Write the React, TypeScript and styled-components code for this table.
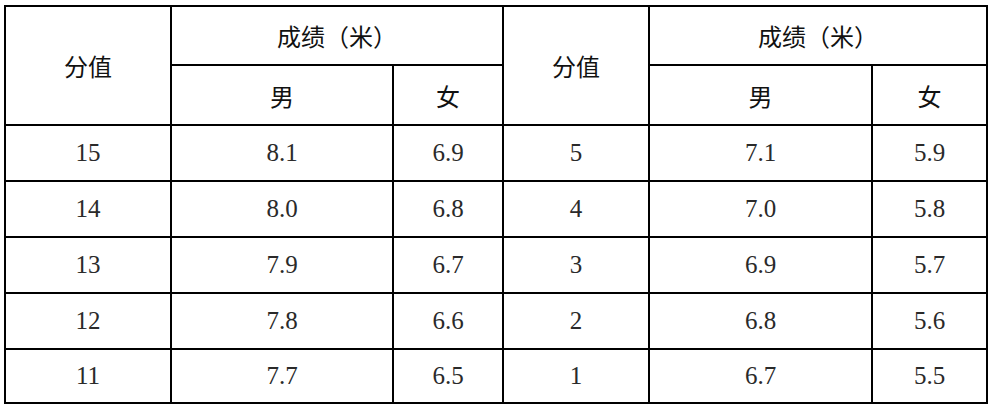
import styled, { createGlobalStyle } from "styled-components";

const GlobalStyle = createGlobalStyle`
  html, body {
    margin: 0;
    padding: 0;
    background: #ffffff;
  }
`;

interface IRow {
  scoreA: number;
  maleA: string;
  femaleA: string;
  scoreB: number;
  maleB: string;
  femaleB: string;
}

const rows: IRow[] = [
  { scoreA: 15, maleA: "8.1", femaleA: "6.9", scoreB: 5, maleB: "7.1", femaleB: "5.9" },
  { scoreA: 14, maleA: "8.0", femaleA: "6.8", scoreB: 4, maleB: "7.0", femaleB: "5.8" },
  { scoreA: 13, maleA: "7.9", femaleA: "6.7", scoreB: 3, maleB: "6.9", femaleB: "5.7" },
  { scoreA: 12, maleA: "7.8", femaleA: "6.6", scoreB: 2, maleB: "6.8", femaleB: "5.6" },
  { scoreA: 11, maleA: "7.7", femaleA: "6.5", scoreB: 1, maleB: "6.7", femaleB: "5.5" },
];

const colWidths = [166, 222, 110, 146, 223, 115];

function App() {
  return (
    <>
      <GlobalStyle />
      <Page>
        <Table>
          <colgroup>
            {colWidths.map((w, i) => (
              <col key={i} style={{ width: w }} />
            ))}
          </colgroup>
          <thead>
            <HeadRow $height={59}>
              <HeadCell rowSpan={2}>分值</HeadCell>
              <HeadCell colSpan={2}>成绩（米）</HeadCell>
              <HeadCell rowSpan={2}>分值</HeadCell>
              <HeadCell colSpan={2}>成绩（米）</HeadCell>
            </HeadRow>
            <HeadRow $height={60}>
              <HeadCell>男</HeadCell>
              <HeadCell>女</HeadCell>
              <HeadCell>男</HeadCell>
              <HeadCell>女</HeadCell>
            </HeadRow>
          </thead>
          <tbody>
            {rows.map((row, i) => (
              <BodyRow key={row.scoreA} $height={i === rows.length - 1 ? 54 : 56}>
                <NumCell>{row.scoreA}</NumCell>
                <NumCell>{row.maleA}</NumCell>
                <NumCell>{row.femaleA}</NumCell>
                <NumCell>{row.scoreB}</NumCell>
                <NumCell>{row.maleB}</NumCell>
                <NumCell>{row.femaleB}</NumCell>
              </BodyRow>
            ))}
          </tbody>
        </Table>
      </Page>
    </>
  );
}

const Page = styled.div`
  padding: 5px 0 0 4px;
`;

const Table = styled.table`
  border-collapse: collapse;
  table-layout: fixed;
  width: 982px;
  border: 2px solid #000;
`;

const HeadRow = styled.tr<{ $height: number }>`
  height: ${(p) => p.$height}px;
`;

const BodyRow = styled.tr<{ $height: number }>`
  height: ${(p) => p.$height}px;
`;

const HeadCell = styled.th`
  border: 2px solid #000;
  padding: 0;
  text-align: center;
  vertical-align: middle;
  font-family: "Noto Sans CJK SC", "Noto Sans", sans-serif;
  font-weight: 400;
  font-size: 24px;
  color: #111;
`;

const NumCell = styled.td`
  border: 2px solid #000;
  padding: 0;
  text-align: center;
  vertical-align: middle;
  font-family: "Liberation Serif", "Times New Roman", serif;
  font-size: 25px;
  color: #2a2a2a;
`;

export default App;
